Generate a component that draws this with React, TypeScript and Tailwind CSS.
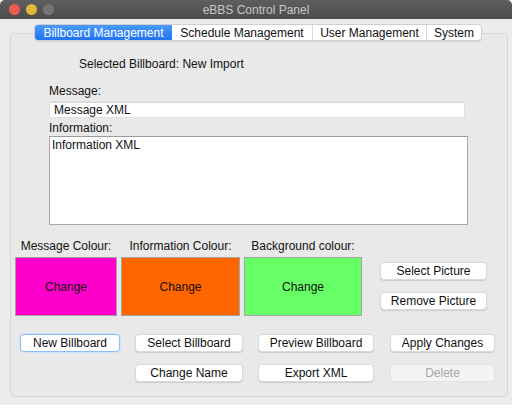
const tabs = [
  { label: "Billboard Management", w: "w-[137px]", active: true },
  { label: "Schedule Management", w: "w-[140px]", active: false },
  { label: "User Management", w: "w-[114px]", active: false },
  { label: "System", w: "w-[55px]", active: false },
];

const colours = [
  { label: "Message Colour:", w: "w-[102px]", bg: "bg-[#ff00cc]" },
  { label: "Information Colour:", w: "w-[119px]", bg: "bg-[#ff6600]" },
  { label: "Background colour:", w: "w-[118px]", bg: "bg-[#66ff66]" },
];

function Button({
  children,
  className = "",
  disabled = false,
  focused = false,
}: {
  children: React.ReactNode;
  className?: string;
  disabled?: boolean;
  focused?: boolean;
}) {
  return (
    <button
      className={
        "h-[18px] rounded-[4px] text-[12px] leading-none " +
        (disabled
          ? "border border-[#e2e2e2] bg-[#f4f4f4] text-[#a6a6a6] "
          : focused
            ? "border border-[#8fbcf3] bg-white text-[#111] shadow-[0_0_0_1px_#cfe2fb] "
            : "border border-[#dadada] bg-white text-[#111] shadow-[0_1px_1px_rgba(0,0,0,0.12)] ") +
        className
      }
    >
      {children}
    </button>
  );
}

export default function App() {
  return (
    <div className="h-[410px] w-[519px] bg-white font-['Liberation_Sans',Arial,sans-serif] text-[12px] text-[#111]">
      <div className="flex h-[405px] w-[512px] flex-col overflow-hidden rounded-t-[5px] bg-[#ececec]">
        {/* title bar */}
        <div className="relative flex h-[19px] shrink-0 items-center justify-center bg-gradient-to-b from-[#5e5e5e] to-[#4c4c4c]">
          <div className="absolute left-[9px] top-[4px] flex gap-[6px]">
            <span className="h-[11px] w-[11px] rounded-full bg-[#ee5a52]" />
            <span className="h-[11px] w-[11px] rounded-full bg-[#e2b93d]" />
            <span className="h-[11px] w-[11px] rounded-full bg-[#757575]" />
          </div>
          <span className="text-[12px] text-[#c6c6c6]">eBBS Control Panel</span>
        </div>

        {/* tabs */}
        <div className="relative z-10 mt-[5px] flex justify-center pl-[4px]">
          <div className="flex h-[17px] overflow-hidden rounded-[4px] border border-[#cfcfcf] bg-white shadow-[0_1px_1px_rgba(0,0,0,0.1)]">
            {tabs.map((t, i) => (
              <div
                key={t.label}
                className={
                  "flex items-center justify-center text-[12px] " +
                  t.w +
                  (t.active
                    ? " bg-gradient-to-b from-[#4a9af8] to-[#1f73f0] text-white"
                    : " text-[#111]") +
                  (i > 1 ? " border-l border-[#d8d8d8]" : "")
                }
              >
                {t.label}
              </div>
            ))}
          </div>
        </div>

        {/* pane */}
        <div className="mx-[10px] -mt-[8px] flex h-[364px] w-[498px] flex-col rounded-[4px] border border-[#d6d6d6] bg-[#e9e9e9]">
          <div className="ml-[68px] mt-[22px] leading-[16px]">Selected Billboard: New Import</div>

          <div className="ml-[38px] mt-[11px] leading-[16px]">Message:</div>
          <div className="ml-[38px] mt-[2px] flex h-[17px] w-[416px] items-center border border-[#e0e0e0] bg-white pl-[4px] shadow-[inset_0_1px_0_#d4d4d4]">
            Message XML
          </div>

          <div className="ml-[38px] mt-[2px] leading-[16px]">Information:</div>
          <div className="ml-[38px] h-[89px] w-[419px] border border-[#a9a9a9] border-t-[#9a9a9a] bg-white pl-[2px] pt-[1px] leading-[15px]">
            Information XML
          </div>

          {/* colours */}
          <div className="ml-[4px] mt-[13px] flex">
            <div className="flex gap-[4px]">
              {colours.map((c) => (
                <div key={c.label} className="flex flex-col items-center">
                  <div className="leading-[16px]">{c.label}</div>
                  <div
                    className={
                      "mt-[3px] flex h-[59px] items-center justify-center border border-[#a3a3a3] " +
                      c.w +
                      " " +
                      c.bg
                    }
                  >
                    Change
                  </div>
                </div>
              ))}
            </div>
            <div className="ml-[18px] flex flex-col gap-[12px] pt-[24px]">
              <Button className="w-[107px]">Select Picture</Button>
              <Button className="w-[107px]">Remove Picture</Button>
            </div>
          </div>

          {/* actions */}
          <div className="ml-[9px] mt-[18px] grid grid-cols-[100px_108px_116px_106px] gap-x-[15px] gap-y-[12px]">
            <Button focused>New Billboard</Button>
            <Button>Select Billboard</Button>
            <Button>Preview Billboard</Button>
            <Button className="ml-[1px]">Apply Changes</Button>
            <div />
            <Button>Change Name</Button>
            <Button>Export XML</Button>
            <Button className="ml-[1px]" disabled>
              Delete
            </Button>
          </div>
        </div>
      </div>
    </div>
  );
}
